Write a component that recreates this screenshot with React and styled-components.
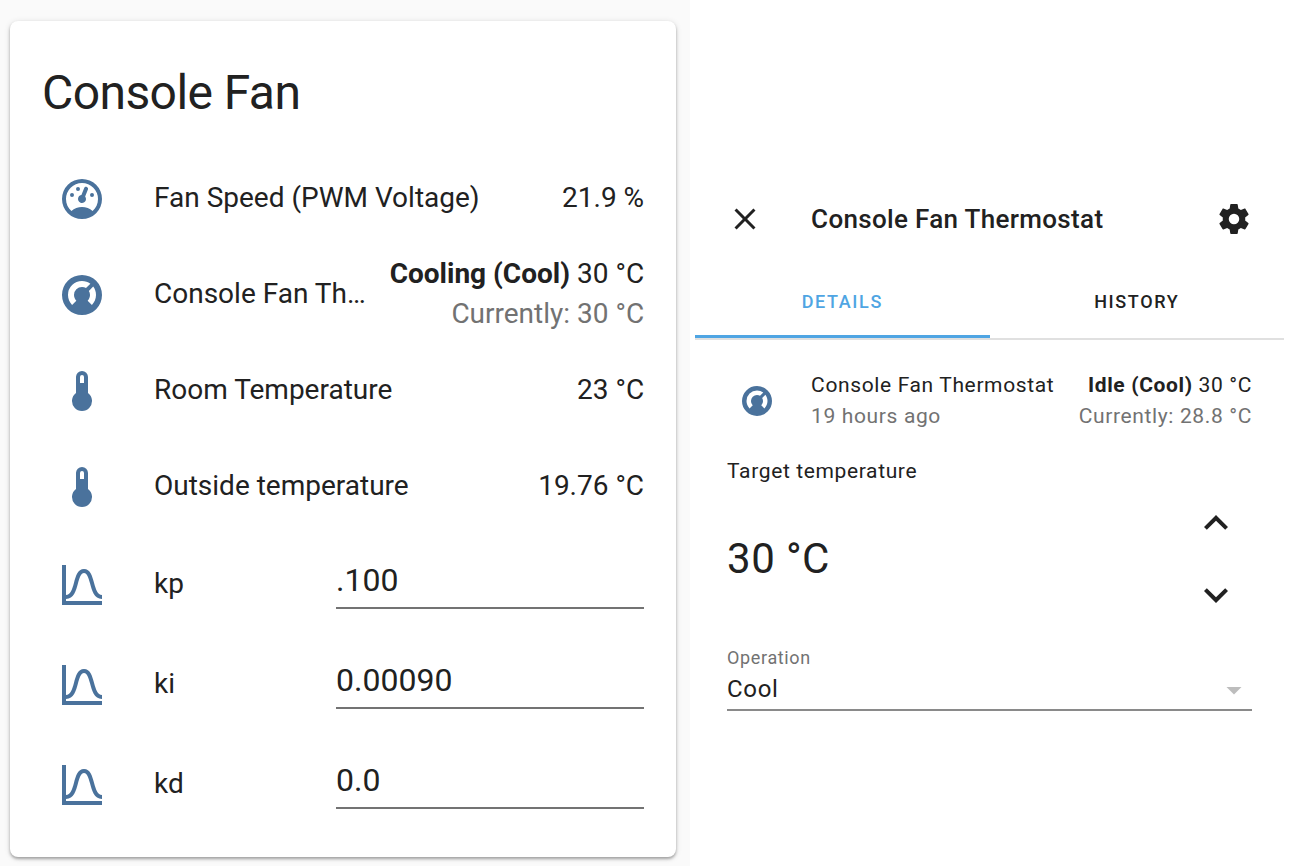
import React, { useState } from "react";
import styled, { createGlobalStyle } from "styled-components";

const GlobalStyle = createGlobalStyle`
  *, *::before, *::after { box-sizing: border-box; }
  body {
    margin: 0;
    background: #fff;
    color: #212121;
    font-family: Roboto, "Liberation Sans", sans-serif;
  }
  button, input, select { font: inherit; color: inherit; letter-spacing: inherit; }
`;

const icons = {
  gauge:
    "M12 2A10 10 0 0 0 2 12A10 10 0 0 0 12 22A10 10 0 0 0 22 12A10 10 0 0 0 12 2M12 4A8 8 0 0 1 20 12C20 14.4 19 16.5 17.3 18C15.9 16.7 14 16 12 16C10 16 8.2 16.7 6.7 18C5 16.5 4 14.4 4 12A8 8 0 0 1 12 4M14 5.89C13.62 5.9 13.26 6.15 13.1 6.54L11.81 9.77L11.71 10C11 10.13 10.41 10.6 10.14 11.26C9.73 12.29 10.23 13.45 11.26 13.86C12.29 14.27 13.45 13.77 13.86 12.74C14.12 12.08 14 11.32 13.57 10.76L13.67 10.5L14.96 7.29L14.97 7.26C15.17 6.75 14.92 6.17 14.41 5.96C14.28 5.91 14.15 5.89 14 5.89M10 6A1 1 0 0 0 9 7A1 1 0 0 0 10 8A1 1 0 0 0 11 7A1 1 0 0 0 10 6M7 9A1 1 0 0 0 6 10A1 1 0 0 0 7 11A1 1 0 0 0 8 10A1 1 0 0 0 7 9M17 9A1 1 0 0 0 16 10A1 1 0 0 0 17 11A1 1 0 0 0 18 10A1 1 0 0 0 17 9Z",
  thermostat:
    "M16.95,16.95L14.83,14.83C15.55,14.1 16,13.1 16,12C16,11.26 15.79,10.57 15.43,10L17.6,7.81C18.5,9 19,10.43 19,12C19,13.93 18.22,15.68 16.95,16.95M12,5C13.57,5 15,5.5 16.19,6.4L14,8.56C13.43,8.21 12.74,8 12,8A4,4 0 0,0 8,12C8,13.1 8.45,14.1 9.17,14.83L7.05,16.95C5.78,15.68 5,13.93 5,12A7,7 0 0,1 12,5M12,2A10,10 0 0,0 2,12A10,10 0 0,0 12,22A10,10 0 0,0 22,12A10,10 0 0,0 12,2Z",
  thermometer:
    "M15 13V5A3 3 0 0 0 9 5V13A5 5 0 1 0 15 13M12 4A1 1 0 0 1 13 5V8H11V5A1 1 0 0 1 12 4Z",
  bellCurve:
    "M9.96,11.31C10.82,8.1 11.5,6 13,6C14.5,6 15.18,8.1 16.04,11.31C17,14.92 18.1,19 22,19V17C19.8,17 19,14.54 17.97,10.8C17.08,7.46 16.15,4 13,4C9.85,4 8.92,7.46 8.03,10.8C7.03,14.54 6.2,17 4,17V2H2V22H22V20H4V19C7.9,19 9,14.92 9.96,11.31Z",
  close:
    "M19,6.41L17.59,5L12,10.59L6.41,5L5,6.41L10.59,12L5,17.59L6.41,19L12,13.41L17.59,19L19,17.59L13.41,12L19,6.41Z",
  cog: "M12,15.5A3.5,3.5 0 0,1 8.5,12A3.5,3.5 0 0,1 12,8.5A3.5,3.5 0 0,1 15.5,12A3.5,3.5 0 0,1 12,15.5M19.43,12.97C19.47,12.65 19.5,12.33 19.5,12C19.5,11.67 19.47,11.34 19.43,11L21.54,9.37C21.73,9.22 21.78,8.95 21.66,8.73L19.66,5.27C19.54,5.05 19.27,4.96 19.05,5.05L16.56,6.05C16.04,5.66 15.5,5.32 14.87,5.07L14.5,2.42C14.46,2.18 14.25,2 14,2H10C9.75,2 9.54,2.18 9.5,2.42L9.13,5.07C8.5,5.32 7.96,5.66 7.44,6.05L4.95,5.05C4.73,4.96 4.46,5.05 4.34,5.27L2.34,8.73C2.21,8.95 2.27,9.22 2.46,9.37L4.57,11C4.53,11.34 4.5,11.67 4.5,12C4.5,12.33 4.53,12.65 4.57,12.97L2.46,14.63C2.27,14.78 2.21,15.05 2.34,15.27L4.34,18.73C4.46,18.95 4.73,19.03 4.95,18.95L7.44,17.94C7.96,18.34 8.5,18.68 9.13,18.93L9.5,21.58C9.54,21.82 9.75,22 10,22H14C14.25,22 14.46,21.82 14.5,21.58L14.87,18.93C15.5,18.67 16.04,18.34 16.56,17.94L19.05,18.95C19.27,19.03 19.54,18.95 19.66,18.73L21.66,15.27C21.78,15.05 21.73,14.78 21.54,14.63L19.43,12.97Z",
  up: "M7.41,15.41L12,10.83L16.59,15.41L18,14L12,8L6,14L7.41,15.41Z",
  down: "M7.41,8.58L12,13.17L16.59,8.58L18,10L12,16L6,10L7.41,8.58Z",
  menuDown: "M7,10L12,15L17,10H7Z",
};

const Svg = styled.svg`
  display: block;
  flex: none;
  width: ${(p) => p.$size}px;
  height: ${(p) => p.$size}px;
  fill: ${(p) => p.$color || "currentColor"};
`;

const Icon = ({ name, size = 36, color }) => (
  <Svg viewBox="0 0 24 24" $size={size} $color={color} aria-hidden="true">
    <path d={icons[name]} />
  </Svg>
);

const STATE_BLUE = "#4a729c";

const Page = styled.div`
  display: flex;
  min-height: 100vh;
`;

const Dashboard = styled.main`
  flex: 69 1 0;
  min-width: 0;
  padding: 21px 14px 9px 10px;
  background: #fafafa;
`;

const Card = styled.section`
  padding: 32px 32px 30px;
  background: #fff;
  border-radius: 8px;
  box-shadow: 0 2px 3px rgba(0, 0, 0, 0.3), 0 1px 6px rgba(0, 0, 0, 0.12);
`;

const CardTitle = styled.h1`
  margin: 0 0 26px;
  font-size: 48px;
  line-height: 80px;
  font-weight: 400;
  letter-spacing: -0.012em;
`;

const Rows = styled.div`
  display: flex;
  flex-direction: column;
  gap: 16px;
`;

const Row = styled.div`
  display: flex;
  align-items: center;
  height: ${(p) => (p.$field ? 84 : 80)}px;
  font-size: 28px;
  line-height: 40px;
`;

const RowIcon = styled.span`
  display: flex;
  justify-content: center;
  flex: none;
  width: 80px;
  margin-right: 32px;
`;

const RowName = styled.span`
  flex: 1 1 0;
  min-width: 0;
  padding-bottom: 2px;
  overflow: hidden;
  text-overflow: ellipsis;
  white-space: nowrap;
`;

const RowState = styled.span`
  margin-left: 24px;
  padding-bottom: 2px;
  text-align: right;
  white-space: nowrap;
`;

const Current = styled.div`
  color: #727272;
`;

const Field = styled.input`
  flex: none;
  width: 63%;
  max-width: 308px;
  height: 56px;
  margin-bottom: 8px;
  padding: 0;
  border: 0;
  border-bottom: 2px solid #737373;
  border-radius: 0;
  outline: 0;
  background: transparent;
  font-size: 32px;
`;

const Dialog = styled.aside`
  flex: 61 1 0;
  min-width: 0;
  padding: 179px 16px 0 5px;
  font-size: 21px;
  line-height: 31px;
  letter-spacing: 0.03em;
`;

const DialogHeader = styled.header`
  display: flex;
  align-items: center;
  height: 80px;
  padding: 0 32px;
`;

const DialogTitle = styled.h2`
  flex: 1;
  margin: 0;
  padding-left: 48px;
  font-size: 26px;
  font-weight: 500;
  letter-spacing: 0.0125em;
`;

const IconButton = styled.button`
  display: flex;
  padding: 0;
  border: 0;
  background: none;
  cursor: pointer;
`;

const Tabs = styled.div`
  display: flex;
  height: 81px;
  border-bottom: 2px solid #e0e0e0;
`;

const Tab = styled.button`
  flex: 1;
  height: 79px;
  padding: 8px 0 0;
  border: 0;
  border-bottom: 3px solid ${(p) => (p.$active ? "#4fa5e3" : "transparent")};
  background: none;
  color: ${(p) => (p.$active ? "#4fa5e3" : "#212121")};
  font-size: 18px;
  font-weight: 500;
  letter-spacing: 0.09em;
  text-transform: uppercase;
  cursor: pointer;
`;

const DialogBody = styled.div`
  padding: 30px 32px 0;
`;

const EntityRow = styled.div`
  display: flex;
  align-items: center;
  white-space: nowrap;
`;

const EntityIcon = styled.span`
  display: flex;
  justify-content: center;
  flex: none;
  width: 60px;
  margin-right: 24px;
`;

const EntityInfo = styled.div`
  flex: 1;
`;

const EntityState = styled.div`
  text-align: right;
`;

const SectionLabel = styled.div`
  margin-top: 24px;
`;

const TargetRow = styled.div`
  display: flex;
  align-items: center;
  justify-content: space-between;
  margin-top: 12px;
`;

const Target = styled.output`
  font-size: 42px;
  line-height: 72px;
  letter-spacing: 0.01em;
`;

const Stepper = styled.div`
  display: flex;
  flex-direction: column;
  gap: 24px;
  padding-right: 12px;
`;

const Operation = styled.div`
  margin-top: 27px;
`;

const OperationLabel = styled.label`
  display: block;
  color: #727272;
  font-size: 18px;
  line-height: 24px;
`;

const SelectBox = styled.div`
  display: grid;
  align-items: center;
  border-bottom: 2px solid #8a8a8a;

  & > * { grid-area: 1 / 1; }
  & > svg { justify-self: end; pointer-events: none; }
`;

const Select = styled.select`
  appearance: none;
  width: 100%;
  height: 39px;
  padding: 0;
  border: 0;
  outline: 0;
  background: transparent;
  font-size: 24px;
`;

const sensors = [
  { icon: "gauge", name: "Fan Speed (PWM Voltage)", state: "21.9 %" },
  {
    icon: "thermostat",
    name: "Console Fan Thermostat",
    mode: "Cooling (Cool)",
    state: "30 °C",
    current: "Currently: 30 °C",
  },
  { icon: "thermometer", name: "Room Temperature", state: "23 °C" },
  { icon: "thermometer", name: "Outside temperature", state: "19.76 °C" },
];

const gains = [
  { id: "kp", value: ".100" },
  { id: "ki", value: "0.00090" },
  { id: "kd", value: "0.0" },
];

export default function App() {
  const [tab, setTab] = useState("Details");
  const [target, setTarget] = useState(30);

  return (
    <>
      <GlobalStyle />
      <Page>
        <Dashboard>
          <Card>
            <CardTitle>Console Fan</CardTitle>
            <Rows>
              {sensors.map((s) => (
                <Row key={s.name}>
                  <RowIcon>
                    <Icon name={s.icon} size={48} color={STATE_BLUE} />
                  </RowIcon>
                  <RowName>{s.name}</RowName>
                  <RowState>
                    {s.mode && <strong>{s.mode} </strong>}
                    {s.state}
                    {s.current && <Current>{s.current}</Current>}
                  </RowState>
                </Row>
              ))}
              {gains.map((g) => (
                <Row key={g.id} $field>
                  <RowIcon>
                    <Icon name="bellCurve" size={48} color={STATE_BLUE} />
                  </RowIcon>
                  <RowName as="label" htmlFor={g.id}>
                    {g.id}
                  </RowName>
                  <Field id={g.id} defaultValue={g.value} />
                </Row>
              ))}
            </Rows>
          </Card>
        </Dashboard>

        <Dialog>
          <DialogHeader>
            <IconButton aria-label="Close">
              <Icon name="close" />
            </IconButton>
            <DialogTitle>Console Fan Thermostat</DialogTitle>
            <IconButton aria-label="Settings">
              <Icon name="cog" />
            </IconButton>
          </DialogHeader>
          <Tabs role="tablist">
            {["Details", "History"].map((t) => (
              <Tab
                key={t}
                role="tab"
                aria-selected={tab === t}
                $active={tab === t}
                onClick={() => setTab(t)}
              >
                {t}
              </Tab>
            ))}
          </Tabs>
          <DialogBody>
            <EntityRow>
              <EntityIcon>
                <Icon name="thermostat" color={STATE_BLUE} />
              </EntityIcon>
              <EntityInfo>
                Console Fan Thermostat
                <Current>19 hours ago</Current>
              </EntityInfo>
              <EntityState>
                <strong>Idle (Cool)</strong> 30 °C
                <Current>Currently: 28.8 °C</Current>
              </EntityState>
            </EntityRow>
            <SectionLabel>Target temperature</SectionLabel>
            <TargetRow>
              <Target>{target} °C</Target>
              <Stepper>
                <IconButton aria-label="Increase" onClick={() => setTarget(target + 1)}>
                  <Icon name="up" size={48} />
                </IconButton>
                <IconButton aria-label="Decrease" onClick={() => setTarget(target - 1)}>
                  <Icon name="down" size={48} />
                </IconButton>
              </Stepper>
            </TargetRow>
            <Operation>
              <OperationLabel htmlFor="operation">Operation</OperationLabel>
              <SelectBox>
                <Select id="operation" defaultValue="Cool">
                  <option>Cool</option>
                  <option>Off</option>
                </Select>
                <Icon name="menuDown" color="#bdbdbd" />
              </SelectBox>
            </Operation>
          </DialogBody>
        </Dialog>
      </Page>
    </>
  );
}
